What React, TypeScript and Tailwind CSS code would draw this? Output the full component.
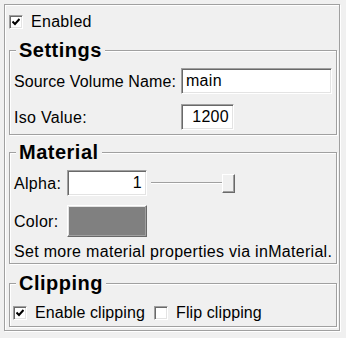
import React from "react";

const font = { fontFamily: '"Liberation Sans", Arial, sans-serif' };

function Check({ checked }: { checked: boolean }) {
  return (
    <span className="relative block w-[14px] h-[14px] bg-white border border-t-[#a0a0a0] border-l-[#a0a0a0] border-r-white border-b-white shadow-[inset_1px_1px_0_#696969,inset_-1px_-1px_0_#e3e3e3]">
      {checked && (
        <svg className="absolute left-[2px] top-[2px]" width="8" height="8" viewBox="0 0 8 8">
          <path d="M0.5 3.5 L3 6 L7.5 1" fill="none" stroke="#000" strokeWidth="2" />
        </svg>
      )}
    </span>
  );
}

function GroupBox({ title, className, children }: { title: string; className: string; children: React.ReactNode }) {
  return (
    <div className={`relative border border-[#a0a0a0] shadow-[inset_1px_1px_0_#fff,1px_1px_0_#fff] ${className}`}>
      <span className="absolute left-[6px] -top-[11px] px-[3px] bg-[#f0f0f0] text-[20px] leading-[20px] font-bold tracking-[0.5px]">
        {title}
      </span>
      {children}
    </div>
  );
}

const sunken =
  "bg-white border border-t-[#a0a0a0] border-l-[#a0a0a0] border-r-white border-b-white shadow-[inset_1px_1px_0_#696969,inset_-1px_-1px_0_#e3e3e3]";

export default function App() {
  return (
    <div className="w-[346px] h-[338px] bg-[#f0f0f0] text-black text-[16px] leading-[18px] tracking-[0.3px] p-[4px] whitespace-nowrap" style={font}>
      <div className="flex flex-col w-[336px] h-[327px] border border-[#a0a0a0] shadow-[inset_1px_1px_0_#fff,1px_1px_0_#fff] pt-[8px] pl-[4px] pr-[2px]">
        {/* Enabled */}
        <label className="flex items-center h-[18px] gap-[8px]">
          <Check checked />
          <span>Enabled</span>
        </label>

        {/* Settings */}
        <GroupBox title="Settings" className="mt-[19px] pt-[17px] pb-[4px] pl-[4px] pr-[4px]">
          <div className="grid grid-cols-[auto_1fr] gap-x-[5px] gap-y-[10px] items-center">
            <span className="pt-[2px] tracking-[0.1px]">Source Volume Name:</span>
            <div className={`h-[26px] flex items-center pl-[4px] ${sunken}`}>main</div>
            <span className="pt-[2px]">Iso Value:</span>
            <div className={`h-[26px] w-[53px] flex items-center justify-end pr-[4px] ${sunken}`}>1200</div>
          </div>
        </GroupBox>

        {/* Material */}
        <GroupBox title="Material" className="mt-[17px] pt-[17px] pb-[3px] pl-[4px] pr-[4px]">
          <div className="grid grid-cols-[53px_80px_1fr] gap-y-[9px] items-center">
            <span className="pt-[2px]">Alpha:</span>
            <div className={`h-[26px] flex items-center justify-end pr-[4px] ${sunken}`}>1</div>
            <div className="flex items-center ml-[4px] w-[84px]">
              <div className="flex-1 h-[2px] border-t border-[#a0a0a0] border-b border-b-white" />
              <div className="w-[13px] h-[19px] bg-[#f0f0f0] border border-t-white border-l-white border-r-[#696969] border-b-[#696969] shadow-[inset_-1px_-1px_0_#a0a0a0]" />
            </div>
            <span className="pt-[2px]">Color:</span>
            <div className="h-[32px] bg-[#808080] border border-t-white border-l-white border-r-[#696969] border-b-[#696969] shadow-[inset_-1px_-1px_0_#a0a0a0,inset_1px_1px_0_#e3e3e3]" />
            <span />
          </div>
          <div className="mt-[6px] mb-[-1px]">Set more material properties via inMaterial.</div>
        </GroupBox>

        {/* Clipping */}
        <GroupBox title="Clipping" className="mt-[19px] pt-[20px] pb-[4px] pl-[3px]">
          <div className="flex items-center h-[18px] tracking-[0.1px]">
            <label className="flex items-center gap-[8px]">
              <Check checked />
              <span>Enable clipping</span>
            </label>
            <label className="flex items-center gap-[8px] ml-[9px]">
              <Check checked={false} />
              <span>Flip clipping</span>
            </label>
          </div>
        </GroupBox>
      </div>
    </div>
  );
}
